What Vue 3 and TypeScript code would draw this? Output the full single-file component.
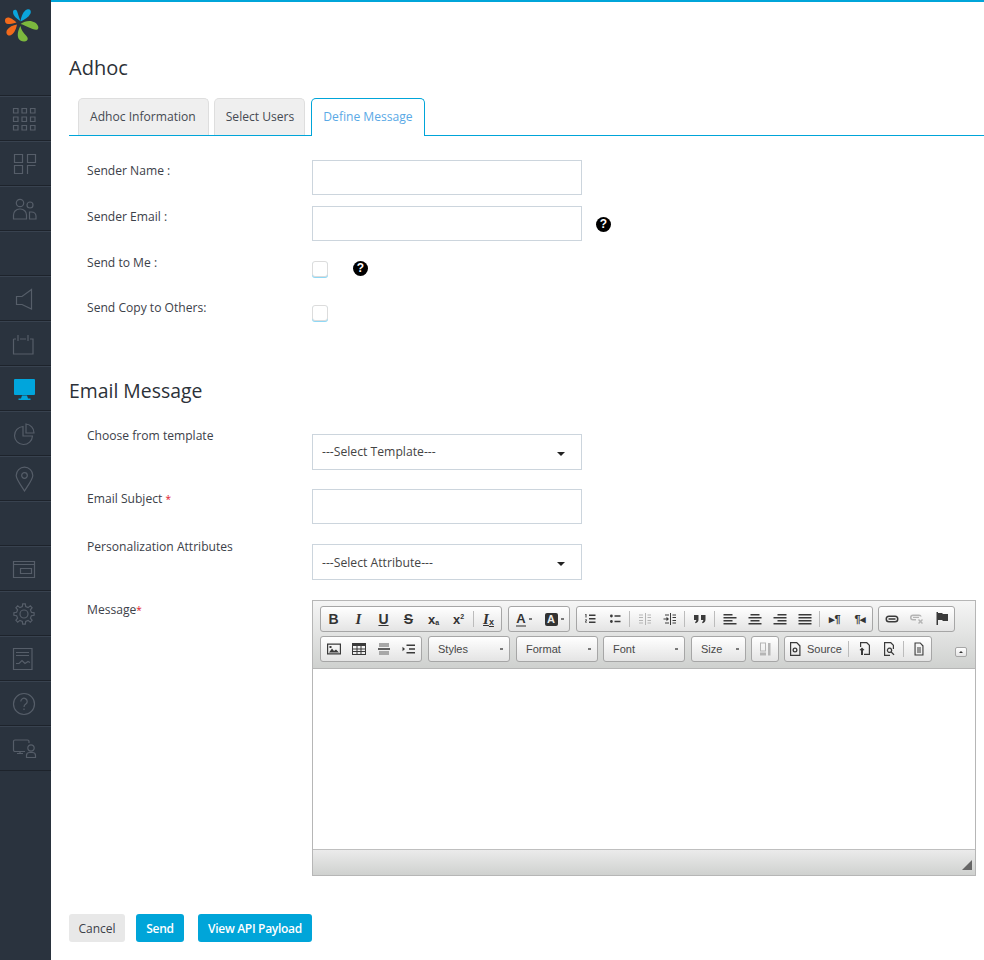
<template>
  <div class="page">
    <aside class="sidebar">
      <div class="logo">
        <svg width="51" height="95" viewBox="0 0 51 95">
          <path d="M13 12C13 9.5 16 9 17 11C18 14 19 17 20.5 21C17 19 13 16 13 12Z" fill="#0aa5dc" />
          <path d="M20.5 21.5C21 16 24 10.5 27 9.5C30 8.5 31.5 11 30.5 13.5C28.5 17.5 24.5 19.5 20.5 21.5Z" fill="#0aa5dc" />
          <path d="M5 20.5C5 17.5 8 17 10 18C12.5 19 14.5 20.5 16.5 22.5C13 23.5 10 24 8 24C6 24 5 22.5 5 20.5Z" fill="#f26a1b" />
          <path d="M17 24.5C13 25 9 27 7 30C5.5 33 7 36 10 35.5C13 35 16 30 17 24.5Z" fill="#f26a1b" />
          <path d="M20.5 24C25 20.5 31 20 35 22.5C38 24.5 39.5 28 37.5 29.5C35 30.5 32 28.5 29 27.5C26 26 23 24.5 20.5 24Z" fill="#7cb83e" />
          <path d="M20.5 26C18 30 17 35 18.5 38.5C20 41.5 25 42.5 27 40.5C28.5 39 27.5 37 26 35.5C23.5 33 21 30 20.5 26Z" fill="#7cb83e" />
        </svg>
      </div>
      <div v-for="(item, i) in nav" :key="i" class="nav-item">
        <svg v-if="item" width="26" height="26" viewBox="0 0 26 26" class="nav-icon" :class="{ active: item.active }">
          <path :d="item.d" />
        </svg>
      </div>
    </aside>

    <main class="main">
      <h1 class="title">Adhoc</h1>
      <div class="tabs">
        <div class="tab">Adhoc Information</div>
        <div class="tab">Select Users</div>
        <div class="tab current">Define Message</div>
      </div>

      <section class="form">
        <div class="row r-first">
          <label>Sender Name :</label>
          <input class="field" type="text" />
        </div>
        <div class="row r-first">
          <label>Sender Email :</label>
          <input class="field" type="text" />
          <span class="help help-email">?</span>
        </div>
        <div class="row r-me">
          <label>Send to Me :</label>
          <span class="check"></span>
          <span class="help help-me">?</span>
        </div>
        <div class="row r-copy">
          <label>Send Copy to Others:</label>
          <span class="check"></span>
        </div>

        <h2 class="subtitle">Email Message</h2>

        <div class="row r-template">
          <label>Choose from template</label>
          <div class="select">---Select Template---<i class="select-caret"></i></div>
        </div>
        <div class="row r-subject">
          <label>Email Subject <b class="req">*</b></label>
          <input class="field" type="text" />
        </div>
        <div class="row r-attr">
          <label>Personalization Attributes</label>
          <div class="select">---Select Attribute---<i class="select-caret"></i></div>
        </div>
        <div class="row r-message">
          <label>Message<b class="req">*</b></label>
          <div class="editor">
            <div class="toolbar">
              <div class="tb-row">
                <div v-for="(group, g) in toolbarTop" :key="g" class="tb-group">
                  <template v-for="(t, n) in group" :key="n">
                    <span v-if="t === '|'" class="tb-sep"></span>
                    <span v-else class="tb-btn" :class="tools[t].cls">
                      <span v-if="tools[t].text" class="tb-glyph">{{ tools[t].text }}</span>
                      <svg v-if="tools[t].d" width="16" height="16" viewBox="0 0 16 16" :class="{ off: tools[t].off }">
                        <path :d="tools[t].d" />
                      </svg>
                      <i v-if="tools[t].caret" class="mini-caret"></i>
                    </span>
                  </template>
                </div>
              </div>
              <div class="tb-row">
                <div class="tb-group">
                  <span v-for="t in ['image', 'table', 'rule', 'pagebreak']" :key="t" class="tb-btn">
                    <svg width="16" height="16" viewBox="0 0 16 16">
                      <path :d="tools[t].d" />
                      <path v-if="tools[t].d2" :d="tools[t].d2" class="soft" />
                    </svg>
                  </span>
                </div>
                <div v-for="c in combos" :key="c.label" class="tb-combo" :class="c.cls">
                  <span>{{ c.label }}</span><i class="mini-caret"></i>
                </div>
                <div class="tb-group g-blocks">
                  <span class="tb-btn">
                    <svg width="16" height="16" viewBox="0 0 16 16" class="off"><path :d="tools.blocks.d" /></svg>
                  </span>
                </div>
                <div class="tb-group g-source">
                  <span class="tb-btn btn-source">
                    <svg width="16" height="16" viewBox="0 0 16 16"><path :d="tools.source.d" /></svg>
                    <span class="source-text">Source</span>
                  </span>
                  <span class="tb-sep"></span>
                  <span class="tb-btn"><svg width="16" height="16" viewBox="0 0 16 16"><path :d="tools.template.d" /></svg></span>
                  <span class="tb-btn"><svg width="16" height="16" viewBox="0 0 16 16"><path :d="tools.preview.d" /></svg></span>
                  <span class="tb-sep"></span>
                  <span class="tb-btn"><svg width="16" height="16" viewBox="0 0 16 16"><path :d="tools.doc.d" /></svg></span>
                </div>
                <span class="collapse"></span>
              </div>
            </div>
            <div class="editor-body"></div>
            <div class="editor-foot"><i class="resizer"></i></div>
          </div>
        </div>
      </section>

      <div class="actions">
        <button class="btn cancel">Cancel</button>
        <button class="btn primary send">Send</button>
        <button class="btn primary payload">View API Payload</button>
      </div>
    </main>
  </div>
</template>

<script setup lang="ts">
interface NavIcon {
  d: string
  active?: boolean
}

interface Tool {
  text?: string
  d?: string
  d2?: string
  cls?: string
  caret?: boolean
  off?: boolean
}

// outline of the settings cog
function gear(cx: number, cy: number, inner: number, outer: number, teeth: number): string {
  let d = ''
  const step = (Math.PI * 2) / teeth
  for (let i = 0; i < teeth; i++) {
    const a = i * step
    const pts: [number, number][] = [
      [inner, a - step * 0.28],
      [outer, a - step * 0.16],
      [outer, a + step * 0.16],
      [inner, a + step * 0.28],
    ]
    for (const [r, t] of pts) {
      d += (d ? 'L' : 'M') + (cx + r * Math.cos(t)).toFixed(1) + ' ' + (cy + r * Math.sin(t)).toFixed(1)
    }
  }
  return d + 'Z'
}

const nav: (NavIcon | null)[] = [
  { d: 'M1.5 2.5h4.5v4.5H1.5zM10 2.5h4.5v4.5H10zM18.5 2.5h4.5v4.5h-4.5zM1.5 11h4.5v4.5H1.5zM10 11h4.5v4.5H10zM18.5 11h4.5v4.5h-4.5zM1.5 19.5h4.5V24H1.5zM10 19.5h4.5V24H10zM18.5 19.5h4.5V24h-4.5z' },
  { d: 'M2.5 3.5h8v8h-8zM15.5 3.5h8v8h-8zM2.5 14.5h8v8h-8zM23.5 14.5h-8V23' },
  { d: 'M11.7 7a3.7 3.7 0 1 1-7.4 0a3.7 3.7 0 1 1 7.4 0zM1.5 23v-4a6 6 0 0 1 6-6h1a6 6 0 0 1 6 6v4zM21 9a3 3 0 1 1-6 0a3 3 0 1 1 6 0zM17.5 23v-7h2a4.5 4.5 0 0 1 4.5 4v3z' },
  null,
  { d: 'M19.5 3.5L10 10.5H4.5v8H10L19.5 23z' },
  { d: 'M1.5 8H4M8 8H14M18 8H21V23H1.5V8M6 4V10M16 4V10' },
  { d: 'M3 3h19a1 1 0 0 1 1 1v14a1 1 0 0 1-1 1H3a1 1 0 0 1-1-1V4a1 1 0 0 1 1-1zM10 19.5h5l1 3h2.5V24H6.5v-1.5H9z', active: true },
  { d: 'M11 5.5a9 9 0 1 0 9.5 9.5H11zM14 3a9 9 0 0 1 8 9h-8z' },
  { d: 'M12.5 25C8 18 4.2 13 4.2 9.5a8.3 8.3 0 0 1 16.6 0C20.8 13 17 18 12.5 25zM15.3 9.5a2.8 2.8 0 1 1-5.6 0a2.8 2.8 0 1 1 5.6 0z' },
  null,
  { d: 'M1.5 5.5h21v16h-21zM1.5 8.5h21M8.5 12.5h11v5h-11z' },
  { d: gear(12, 13, 7.6, 10.2, 8) + 'M16 13a4 4 0 1 1-8 0a4 4 0 1 1 8 0z' },
  { d: 'M1.5 2.5H20v21H1.5zM4 6.5h13M4 9.5h13M4 17.5h3l3-3l3 3l3-2l2 1' },
  { d: 'M22.5 13a10.5 10.5 0 1 1-21 0a10.5 10.5 0 1 1 21 0zM8.8 10.5a3.2 3.2 0 1 1 5 2.6c-1.2.8-1.8 1.4-1.8 2.9M12 17.5v1.6' },
  { d: 'M13 15.5H3A1.5 1.5 0 0 1 1.5 14V5.5A1.5 1.5 0 0 1 3 4h12.5A1.5 1.5 0 0 1 17 5.5V7M5 17.5h6M8 15.5v2M22.2 12a3.2 3.2 0 1 1-6.4 0a3.2 3.2 0 1 1 6.4 0zM14.5 21.5v-2a3 3 0 0 1 3-3h3a3 3 0 0 1 3 3v2z' },
]

const lines = (rows: [number, number][]) =>
  rows.map(([x, w], i) => `M${x} ${3 + i * 3}h${w}v1.5h-${w}z`).join('')

const tools: Record<string, Tool> = {
  bold: { text: 'B', cls: 't-bold' },
  italic: { text: 'I', cls: 't-italic' },
  underline: { text: 'U', cls: 't-under' },
  strike: { text: 'S', cls: 't-strike' },
  sub: { text: 'x', cls: 't-sub' },
  sup: { text: 'x', cls: 't-sup' },
  clear: { text: 'I', cls: 't-clear' },
  color: { text: 'A', cls: 't-color', caret: true },
  bg: { text: 'A', cls: 't-bg', caret: true },
  ol: { d: 'M7 3.5h6.5v1.6H7zM7 7h6.5v1.6H7zM7 10.5h6.5v1.6H7zM3.5 3h1v3.5h-1V4H3zM3 8.5h2v.8l-1.2 1.4H5v.8H3v-.8l1.2-1.4H3z' },
  ul: { d: 'M3 5a1.4 1.4 0 1 1 2.8 0a1.4 1.4 0 1 1-2.8 0zM3 10.5a1.4 1.4 0 1 1 2.8 0a1.4 1.4 0 1 1-2.8 0zM7.5 4.2h6v1.6h-6zM7.5 9.7h6v1.6h-6z' },
  outdent: { d: 'M2 3.5h4v1H2zM2 6h4v1H2zM2 9h4v1H2zM2 11.5h4v1H2zM8 2h1v12H8zM10.5 3.5h3.5v1h-3.5zM10.5 6h3.5v1h-3.5zM10.5 9h3.5v1h-3.5zM10.5 11.5h3.5v1h-3.5z', off: true },
  indent: { d: 'M1.5 7.5h3v1h-3zM4.5 5.8L7 8l-2.5 2.2zM8 2h1v12H8zM10.5 3.5h3.5v1h-3.5zM10.5 6h3.5v1h-3.5zM10.5 9h3.5v1h-3.5zM10.5 11.5h3.5v1h-3.5zM3 3.5h4v1H3zM3 11.5h4v1H3z' },
  quote: { d: 'M2 4h4.5v4.5c0 2-1.2 3.5-3 3.8L3 11c.8-.3 1.3-1 1.3-2H2zM9 4h4.5v4.5c0 2-1.2 3.5-3 3.8L10 11c.8-.3 1.3-1 1.3-2H9z' },
  left: { d: lines([[1.5, 9], [1.5, 13], [1.5, 9], [1.5, 13]]) },
  center: { d: lines([[3.5, 9], [1.5, 13], [3.5, 9], [1.5, 13]]) },
  right: { d: lines([[5.5, 9], [1.5, 13], [5.5, 9], [1.5, 13]]) },
  justify: { d: lines([[1.5, 13], [1.5, 13], [1.5, 13], [1.5, 13]]) },
  ltr: { text: '▸¶', cls: 't-bidi' },
  rtl: { text: '¶◂', cls: 't-bidi' },
  link: { d: 'M5 4.5h6a3.5 3.5 0 0 1 0 7H5a3.5 3.5 0 0 1 0-7zM5 6a2 2 0 0 0 0 4h6a2 2 0 0 0 0-4zM4.5 7.3h7v1.4h-7z' },
  unlink: { d: 'M4 3.5h6a3 3 0 0 1 2.8 2h-1.6a1.5 1.5 0 0 0-1.2-.5H4a1.5 1.5 0 0 0 0 3h3v1.5H4a3 3 0 0 1 0-6zM4 5.8h6V7H4zM9 9l1 -1l1.5 1.5L13 8l1 1l-1.5 1.5L14 12l-1 1l-1.5-1.5L10 13l-1-1l1.5-1.5z', off: true },
  flag: { d: 'M2.5 1h1.5v13H2.5zM4 2h4l1 1h5v7H9l-1-1H4z' },
  image: { d: 'M1 2.5h14v11H1zM2.2 3.7v8.6h11.6V3.7zM3 11.5l3-4l2 2.5l2-1.5l3 3zM3.5 5h2v2h-2z' },
  table: { d: 'M1 2h14v12H1zM2 5v2.5h3.5V5zM6.5 5v2.5h3V5zM10.5 5v2.5H14V5zM2 8.5V10h3.5V8.5zM6.5 8.5V10h3V8.5zM10.5 8.5V10H14V8.5zM2 11v2h3.5v-2zM6.5 11v2h3v-2zM10.5 11v2H14v-2z' },
  rule: { d: 'M2 7.2h12v1.6H2z', d2: 'M3 2h10v4H3zM3 10h10v4H3z' },
  pagebreak: { d: 'M1.5 5.8L4 8l-2.5 2.2zM5.5 3.5h8.5v1.6H5.5zM8 7.2h6v1.6H8zM5.5 11h8.5v1.6H5.5z' },
  blocks: { d: 'M3 1.5h6v9H3zM4 2.5v7h4v-7zM3 11.5h6v3H3zM11 2h2.5v12.5H11z', off: true },
  source: { d: 'M3 1h7l3.5 3.5V15H3zM4.2 2.2v11.6h8.1V5.3L9.5 2.2zM8 6.5a2.5 2.5 0 1 1 0 5a2.5 2.5 0 1 1 0-5zM8 7.8a1.2 1.2 0 1 0 0 2.4a1.2 1.2 0 1 0 0-2.4z' },
  template: { d: 'M4 1h7l3 3v10H8v-1.3h4.8V4.6L10.4 2.2H5.2V6H4zM6 6.5l2.5 2.5L7 9.5V14H5V9.5L3.5 9z' },
  preview: { d: 'M3 1h7l3 3v4h-1.2V4.6L9.4 2.2H4.2v11.6H9V15H3zM8.5 6.5a2.8 2.8 0 0 1 2.4 4.3l2.6 2.6l-.9.9l-2.6-2.6A2.8 2.8 0 1 1 8.5 6.5zM8.5 7.8a1.5 1.5 0 1 0 0 3a1.5 1.5 0 1 0 0-3z' },
  doc: { d: 'M3.5 1.5h6l3 3V14.5h-9zM4.6 2.6v10.8h6.8V5.2L9 2.6zM6 6.5h4v1H6zM6 8.5h4v1H6zM6 10.5h4v1H6z' },
}

const toolbarTop: string[][] = [
  ['bold', 'italic', 'underline', 'strike', 'sub', 'sup', '|', 'clear'],
  ['color', 'bg'],
  ['ol', 'ul', '|', 'outdent', 'indent', '|', 'quote', '|', 'left', 'center', 'right', 'justify', '|', 'ltr', 'rtl'],
  ['link', 'unlink', 'flag'],
]

const combos = [
  { label: 'Styles', cls: 'c-styles' },
  { label: 'Format', cls: 'c-format' },
  { label: 'Font', cls: 'c-font' },
  { label: 'Size', cls: 'c-size' },
]
</script>

<style scoped>
.page {
  display: flex;
  min-height: 960px;
  font-family: "Open Sans", "Noto Sans", sans-serif;
  font-size: 12.1px;
  color: #3c4149;
  background: #fff;
  overflow: hidden;
}

.sidebar {
  width: 51px;
  flex: none;
  background: #2a333e;
}

.logo {
  height: 95px;
}

.logo svg {
  display: block;
}

.nav-item {
  height: 45px;
  box-sizing: border-box;
  padding: 10px 0 0 12px;
  border-top: 1px solid #1d232b;
  box-shadow: inset 0 1px 0 #38424f;
}

.nav-item:last-child {
  border-bottom: 1px solid #1d232b;
  height: 46px;
}

.nav-icon {
  display: block;
  fill: none;
  stroke: #565e69;
  stroke-width: 1.2;
}

.nav-icon.active {
  fill: #00a5dc;
  stroke: none;
}

.main {
  flex: 1;
  min-width: 0;
  border-top: 2px solid #00a5d9;
  padding: 52px 0 0 18px;
}

.title {
  margin: 0 0 16px;
  font-size: 20px;
  line-height: 28px;
  font-weight: 400;
  color: #2c3138;
}

.tabs {
  display: flex;
  height: 38px;
  box-sizing: border-box;
  padding-left: 9px;
  border-bottom: 1px solid #00a5d9;
}

.tab {
  height: 37px;
  box-sizing: border-box;
  margin-right: 5px;
  padding: 0 11px;
  line-height: 35px;
  background: #efefef;
  border: 1px solid #dedede;
  border-bottom: 0;
  border-radius: 5px 5px 0 0;
  color: #454a52;
}

.tab:first-child {
  padding-right: 12px;
}

.tab:nth-child(2) {
  padding-right: 10px;
}

.tab.current {
  height: 38px;
  margin-left: 1px;
  background: #fff;
  border: 1px solid #00a5d9;
  border-bottom: 0;
  color: #5aa9e6;
}

.form {
  padding: 24px 0 0 18px;
}

.row {
  display: grid;
  grid-template-columns: 225px 270px 1fr;
  align-items: start;
}

.row label {
  padding-top: 1px;
  line-height: 20px;
  color: #3c4149;
}

.r-subject label,
.r-message label {
  padding-top: 0;
}

.row .editor {
  grid-column: 2 / 4;
}

.r-first {
  margin-bottom: 11px;
}

.r-me {
  height: 25px;
  margin-bottom: 20px;
  grid-template-columns: 225px 41px 1fr;
}

.r-copy {
  height: 24px;
}

.r-template {
  margin-bottom: 19px;
}

.r-subject {
  margin-bottom: 12px;
}

.r-attr {
  margin-bottom: 20px;
}

.r-template .select {
  margin-top: 9px;
}

.r-attr .select {
  margin-top: 8px;
  line-height: 35px;
}

.field {
  display: block;
  width: 270px;
  height: 35px;
  box-sizing: border-box;
  border: 1px solid #ccd5dd;
  background: #fff;
  outline: none;
}

.help {
  width: 15px;
  height: 15px;
  border-radius: 50%;
  background: #000;
  color: #fff;
  font-family: "Liberation Sans", sans-serif;
  font-size: 12px;
  font-weight: 700;
  line-height: 15px;
  text-align: center;
}

.help-email {
  margin: 11px 0 0 14px;
}

.help-me {
  margin: 9px 0 0 0;
}

.check {
  display: block;
  width: 16px;
  height: 16px;
  box-sizing: border-box;
  margin-top: 9px;
  background: #fff;
  border: 1px solid #dcdcdc;
  border-radius: 3px;
  box-shadow: 0 1px 0 #8fd8f5;
}

.r-copy .check {
  margin-top: 8px;
}

.subtitle {
  margin: 56px 0 20px -18px;
  font-size: 19.4px;
  line-height: 28px;
  font-weight: 400;
  color: #2c3138;
}

.select {
  position: relative;
  width: 270px;
  height: 36px;
  box-sizing: border-box;
  padding-left: 9px;
  line-height: 33px;
  font-size: 12.2px;
  border: 1px solid #ccd5dd;
  color: #444;
}

.select-caret {
  position: absolute;
  top: 17px;
  right: 16px;
  border-top: 4px solid #222;
  border-left: 4px solid transparent;
  border-right: 4px solid transparent;
}

.req {
  color: #e0162b;
  font-size: 10px;
  font-weight: 400;
}

.editor {
  width: 664px;
  height: 276px;
  box-sizing: border-box;
  display: flex;
  flex-direction: column;
  border: 1px solid #b6b6b6;
  font-family: "Liberation Sans", sans-serif;
}

.toolbar {
  height: 68px;
  box-sizing: border-box;
  padding: 5px 0 0 7px;
  background: linear-gradient(#f5f5f5, #cfd1cf);
  border-bottom: 1px solid #b6b6b6;
}

.tb-row {
  display: flex;
  height: 26px;
  margin-bottom: 4px;
}

.tb-group,
.tb-combo {
  display: flex;
  height: 26px;
  box-sizing: border-box;
  margin-right: 6px;
  background: linear-gradient(#fff, #e4e4e4);
  border: 1px solid #a6a6a6;
  border-radius: 3px;
}

.tb-group:nth-child(3) {
  margin-right: 5px;
}

.tb-btn {
  display: flex;
  align-items: center;
  justify-content: center;
  width: 25px;
  flex: none;
  font-size: 14px;
  color: #333;
  position: relative;
  isolation: isolate;
}

.tb-btn svg {
  display: block;
  fill: #3a3a3a;
}

.tb-btn svg.off {
  fill: #b5b5b5;
}

.tb-btn svg .soft {
  fill: #a8a8a8;
}

.tb-sep {
  width: 1px;
  flex: none;
  margin: 4px 2px;
  background: #bcbcbc;
}

.t-bold {
  font-weight: 700;
}

.t-italic {
  font-family: "Liberation Serif", serif;
  font-style: italic;
  font-weight: 700;
  font-size: 15px;
}

.t-under {
  font-weight: 700;
  text-decoration: underline;
}

.t-strike {
  font-weight: 700;
  text-decoration: line-through;
}

.t-sub,
.t-sup {
  font-weight: 700;
  font-size: 13px;
}

.t-sub::after {
  content: "a";
  font-size: 7px;
  margin-top: 6px;
}

.t-sup::after {
  content: "2";
  font-size: 7px;
  margin-bottom: 6px;
}

.t-clear {
  font-family: "Liberation Serif", serif;
  font-style: italic;
  font-weight: 700;
  font-size: 15px;
  text-decoration: underline;
}

.t-clear::after {
  content: "x";
  font-family: "Liberation Sans", sans-serif;
  font-style: normal;
  font-size: 9px;
  margin-top: 6px;
}

.t-color,
.t-bg {
  width: 30px;
  font-weight: 700;
  font-size: 13px;
  gap: 3px;
}

.t-color .tb-glyph {
  border-bottom: 2px solid #8a8a8a;
  line-height: 13px;
}

.t-bg .tb-glyph {
  width: 13px;
  height: 13px;
  line-height: 13px;
  text-align: center;
  font-size: 11px;
  color: #eee;
  background: #333;
  border-radius: 2px;
}

.t-bidi {
  font-size: 11px;
  font-weight: 700;
  letter-spacing: -1px;
}

.mini-caret {
  display: inline-block;
  width: 3px;
  height: 0;
  border-top: 1px solid #444;
  border-bottom: 1px solid #444;
  transform: scaleY(0.7);
}

.tb-combo {
  align-items: center;
  justify-content: space-between;
  padding: 0 6px 0 9px;
  font-size: 11px;
  color: #484848;
}

.c-styles {
  width: 82px;
}

.c-format {
  width: 82px;
  margin-right: 5px;
}

.c-font {
  width: 82px;
}

.c-size {
  width: 55px;
  margin-right: 5px;
}

.g-blocks {
  width: 28px;
  margin-right: 5px;
}

.g-blocks .tb-btn {
  width: 26px;
}

.g-source {
  width: 148px;
}

.btn-source {
  width: 61px;
  justify-content: flex-start;
  padding-left: 2px;
  box-sizing: border-box;
  gap: 4px;
}

.source-text {
  font-size: 11px;
  color: #484848;
}

.collapse {
  width: 12px;
  height: 10px;
  box-sizing: border-box;
  margin: 11px 0 0 17px;
  background: linear-gradient(#fff, #e4e4e4);
  border: 1px solid #a6a6a6;
  border-radius: 2px;
  position: relative;
}

.collapse::after {
  content: "";
  position: absolute;
  left: 3px;
  top: 3px;
  border-bottom: 2px solid #333;
  border-left: 2px solid transparent;
  border-right: 2px solid transparent;
}

.editor-body {
  flex: 1;
  background: #fff;
}

.editor-foot {
  position: relative;
  height: 26px;
  box-sizing: border-box;
  background: linear-gradient(#ebebeb, #cfd1cf);
  border-top: 1px solid #bfbfbf;
}

.resizer {
  position: absolute;
  right: 3px;
  bottom: 5px;
  width: 0;
  height: 0;
  border-bottom: 10px solid #666;
  border-left: 10px solid transparent;
}

.actions {
  display: flex;
  margin-top: 38px;
}

.btn {
  height: 28px;
  box-sizing: border-box;
  padding: 0;
  border: 0;
  border-radius: 3px;
  font-family: inherit;
  font-size: 12px;
}

.cancel {
  width: 56px;
  margin-right: 11px;
  background: #e8e8e8;
  color: #3c4149;
}

.primary {
  background: #00a5d9;
  color: #fff;
  font-weight: 600;
  letter-spacing: -0.3px;
}

.send {
  width: 48px;
  margin-right: 14px;
}

.payload {
  width: 114px;
}
</style>
